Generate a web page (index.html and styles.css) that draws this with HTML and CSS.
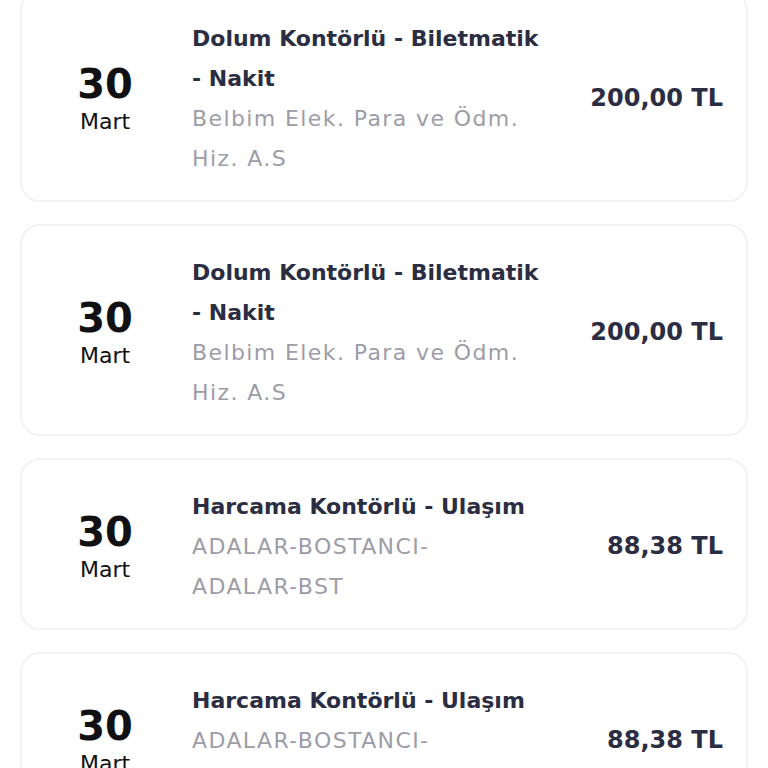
FILE: index.html
```html
<!DOCTYPE html>
<html lang="tr">
<head>
<meta charset="utf-8">
<link rel="stylesheet" href="styles.css">
</head>
<body>
<div class="list">
  <div class="card">
    <div class="date"><div class="day">30</div><div class="month">Mart</div></div>
    <div class="info">
      <div class="title">Dolum Kontörlü - Biletmatik <span class="nw">- Nakit</span></div>
      <div class="sub">Belbim Elek. Para ve Ödm. <span class="nw">Hiz. A.S</span></div>
    </div>
    <div class="amount">200,00 TL</div>
  </div>
  <div class="card">
    <div class="date"><div class="day">30</div><div class="month">Mart</div></div>
    <div class="info">
      <div class="title">Dolum Kontörlü - Biletmatik <span class="nw">- Nakit</span></div>
      <div class="sub">Belbim Elek. Para ve Ödm. <span class="nw">Hiz. A.S</span></div>
    </div>
    <div class="amount">200,00 TL</div>
  </div>
  <div class="card">
    <div class="date"><div class="day">30</div><div class="month">Mart</div></div>
    <div class="info">
      <div class="title">Harcama Kontörlü - Ulaşım</div>
      <div class="sub">ADALAR-BOSTANCI-<span class="nw">ADALAR-BST</span></div>
    </div>
    <div class="amount">88,38 TL</div>
  </div>
  <div class="card">
    <div class="date"><div class="day">30</div><div class="month">Mart</div></div>
    <div class="info">
      <div class="title">Harcama Kontörlü - Ulaşım</div>
      <div class="sub">ADALAR-BOSTANCI-<span class="nw">ADALAR-BST</span></div>
    </div>
    <div class="amount">88,38 TL</div>
  </div>
</div>
</body>
</html>
```
FILE: styles.css
```css
html, body {
  margin: 0;
  padding: 0;
  background: #ffffff;
}
body {
  font-family: "DejaVu Sans", "Open Sans", sans-serif;
  overflow: hidden;
}
.list {
  margin-top: -10px;
  padding: 0 20px;
  display: flex;
  flex-direction: column;
  gap: 22px;
}
.card {
  display: flex;
  align-items: center;
  border: 2px solid #f2f2f4;
  border-radius: 20px;
  padding: 24px 23px 21px 0;
  background: #fff;
}
.date {
  width: 166px;
  flex: none;
  text-align: center;
  padding-top: 5px;
  color: #111114;
}
.day {
  font-size: 40px;
  font-weight: 700;
  line-height: 44px;
}
.month {
  font-size: 22px;
  line-height: 32px;
}
.info {
  width: 360px;
  flex: none;
  margin-left: 4px;
  padding-top: 3px;
}
.nw {
  white-space: nowrap;
}
.title {
  font-size: 22px;
  font-weight: 700;
  line-height: 40px;
  color: #2b2d42;
}
.sub {
  font-size: 22px;
  line-height: 40px;
  letter-spacing: 1.4px;
  color: #9d9ca7;
}
.amount {
  margin-left: auto;
  padding-top: 1px;
  font-size: 24px;
  font-weight: 700;
  color: #2b2d42;
  white-space: nowrap;
}
```
